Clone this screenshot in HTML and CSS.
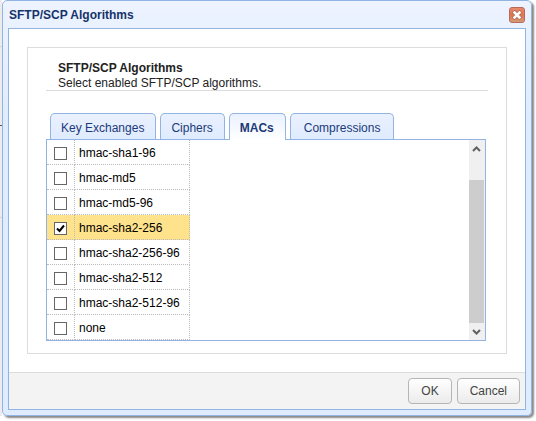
FILE: index.html
```
<!DOCTYPE html>
<html lang="en">
<head>
    <meta charset="UTF-8">
    <meta name="viewport" content="width=device-width, initial-scale=1.0">
    <title>SFTP/SCP Algorithms</title>
    <link rel="stylesheet" href="styles.css">
</head>
<body>
    <div class="dialog" role="dialog" aria-labelledby="dialogTitle">
        <div class="dialog-header">
            <h1 id="dialogTitle">SFTP/SCP Algorithms</h1>
            <button type="button" class="close-btn" aria-label="Close">
                <svg width="16" height="16" viewBox="0 0 16 16">
                    <defs>
                        <linearGradient id="closeFill" x1="0" y1="0" x2="0" y2="1">
                            <stop offset="0" stop-color="#e98a70"/>
                            <stop offset="0.5" stop-color="#de7650"/>
                            <stop offset="1" stop-color="#d3a07c"/>
                        </linearGradient>
                    </defs>
                    <rect x="0.5" y="0.5" width="15" height="15" rx="2.5" fill="url(#closeFill)" stroke="#b96a58"/>
                    <path d="M5.5 5.5L10.5 10.5M10.5 5.5L5.5 10.5" stroke="#b5654f" stroke-width="4" stroke-linecap="square"/>
                    <path d="M5.5 5.5L10.5 10.5M10.5 5.5L5.5 10.5" stroke="#fff" stroke-width="2.6" stroke-linecap="square"/>
                </svg>
            </button>
        </div>

        <form class="dialog-frame">
            <div class="dialog-body">
                <section class="panel">
                    <div class="panel-heading">
                        <h2>SFTP/SCP Algorithms</h2>
                        <p>Select enabled SFTP/SCP algorithms.</p>
                    </div>

                    <div class="tabs" role="tablist">
                        <button type="button" class="tab" role="tab">Key Exchanges</button>
                        <button type="button" class="tab" role="tab">Ciphers</button>
                        <button type="button" class="tab active" role="tab" aria-selected="true">MACs</button>
                        <button type="button" class="tab" role="tab">Compressions</button>
                    </div>

                    <div class="list">
                        <table class="grid">
                            <tr>
                                <td class="check"><input type="checkbox" id="sha1-96"></td>
                                <td><label for="sha1-96">hmac-sha1-96</label></td>
                            </tr>
                            <tr>
                                <td class="check"><input type="checkbox" id="md5"></td>
                                <td><label for="md5">hmac-md5</label></td>
                            </tr>
                            <tr>
                                <td class="check"><input type="checkbox" id="md5-96"></td>
                                <td><label for="md5-96">hmac-md5-96</label></td>
                            </tr>
                            <tr class="selected">
                                <td class="check"><input type="checkbox" id="sha2-256" checked></td>
                                <td><label for="sha2-256">hmac-sha2-256</label></td>
                            </tr>
                            <tr>
                                <td class="check"><input type="checkbox" id="sha2-256-96"></td>
                                <td><label for="sha2-256-96">hmac-sha2-256-96</label></td>
                            </tr>
                            <tr>
                                <td class="check"><input type="checkbox" id="sha2-512"></td>
                                <td><label for="sha2-512">hmac-sha2-512</label></td>
                            </tr>
                            <tr>
                                <td class="check"><input type="checkbox" id="sha2-512-96"></td>
                                <td><label for="sha2-512-96">hmac-sha2-512-96</label></td>
                            </tr>
                            <tr>
                                <td class="check"><input type="checkbox" id="none"></td>
                                <td><label for="none">none</label></td>
                            </tr>
                        </table>

                        <div class="scrollbar">
                            <svg width="15" height="17" viewBox="0 0 15 17" fill="none" stroke="#606060" stroke-width="2">
                                <path d="M4 11L7.5 7.5L11 11"/>
                            </svg>
                            <div class="thumb"></div>
                            <svg width="15" height="17" viewBox="0 0 15 17" fill="none" stroke="#606060" stroke-width="2">
                                <path d="M4 7L7.5 10.5L11 7"/>
                            </svg>
                        </div>
                    </div>
                </section>
            </div>

            <div class="dialog-footer">
                <button type="submit" class="btn">OK</button>
                <button type="button" class="btn">Cancel</button>
            </div>
        </form>
    </div>
</body>
</html>
```
FILE: styles.css
```
* {
    margin: 0;
    padding: 0;
    box-sizing: border-box;
    font-family: "Liberation Sans", Arial, sans-serif;
    font-size: 12px;
}

/* The page behind the dialog shows as a thin strip on the left */
body {
    min-height: 100vh;
    background:
        linear-gradient(#555, #555) 0 125px / 2px 1px no-repeat,
        linear-gradient(#d5d5d5, #d5d5d5) 0 46px / 2px 1px no-repeat,
        linear-gradient(#d5d5d5, #d5d5d5) 0 217px / 2px 1px no-repeat,
        linear-gradient(#ececec, #ececec) 0 0 / 2px 416px no-repeat,
        #fff;
    color: #000;
    line-height: 15px;
}

/* Dialog window */
.dialog {
    margin: 0 4px 0 2px;
    padding: 0 5px 5px;
    background: linear-gradient(#edf3ff, #dfebff 120px);
    border: 1px solid #92b4e3;
    border-radius: 5px;
    box-shadow: 2px 2px 2px #888;
}

.dialog-header {
    display: flex;
    justify-content: space-between;
    align-items: center;
    height: 27px;
    padding: 0 1px;
}

.dialog-header h1 {
    padding-top: 2px;
    color: #15336b;
    font-weight: bold;
}

.close-btn {
    width: 16px;
    height: 16px;
    background: none;
    border: none;
    cursor: pointer;
}

.close-btn svg {
    display: block;
}

.dialog-frame {
    border: 1px solid #92b4e3;
    background: #fff;
}

.dialog-body {
    padding: 18px;
}

/* Algorithms panel */
.panel {
    padding: 13px 18px 12px;
    border: 1px solid #dcdcdc;
}

.panel-heading {
    padding: 0 12px;
    border-bottom: 1px solid #dcdcdc;
    color: #222;
}

.panel-heading h2 {
    font-weight: bold;
}

.panel-heading p {
    line-height: 14px;
}

/* Tabs */
.tabs {
    display: flex;
    gap: 4px;
    margin-top: 22px;
    padding: 0 4px;
}

.tab {
    height: 26px;
    padding: 2px 11px 0 10px;
    background: linear-gradient(#eaf1ff, #dfebff);
    border: 1px solid #92b4e3;
    border-bottom: none;
    border-radius: 5px 5px 0 0;
    color: #1c3a78;
    cursor: pointer;
}

.tab:last-child {
    padding: 2px 13px 0;
}

.tab.active {
    height: 27px;
    margin-bottom: -1px;
    background: linear-gradient(#eaf1ff, #fff);
    font-weight: bold;
    z-index: 1;
}

/* List of algorithms */
.list {
    display: flex;
    justify-content: space-between;
    margin-right: 2px;
    border: 1px solid #92b4e3;
}

.grid {
    border-collapse: separate;
    border-spacing: 0;
}

.grid td {
    height: 25px;
    min-width: 115px;
    padding: 2px 4px 0;
    border-right: 1px dotted #bbb;
    border-bottom: 1px dotted #bbb;
}

.grid td.check {
    width: 28px;
    min-width: 0;
    padding: 2px 7px 0;
}

.grid .selected td {
    background: #ffe28c;
}

.grid input {
    display: block;
    appearance: none;
    width: 13px;
    height: 13px;
    border: 1px solid #666;
    background: #fff;
}

.grid input:checked {
    background: #fff url("data:image/svg+xml,%3Csvg xmlns='http://www.w3.org/2000/svg' viewBox='0 0 11 11'%3E%3Cpath d='M2 5.5L4.5 8L9 2.5' fill='none' stroke='%23000' stroke-width='2'/%3E%3C/svg%3E") center / 11px 11px no-repeat;
}

.scrollbar {
    display: flex;
    flex-direction: column;
    width: 16px;
    background: #f0f0f0;
}

.thumb {
    flex: 1;
    width: 15px;
    margin-top: 23px;
    background: #cdcdcd;
}

/* Footer buttons */
.dialog-footer {
    display: flex;
    justify-content: flex-end;
    gap: 5px;
    padding: 5px;
    background: #f3f3f3;
    border-top: 1px solid #dcdcdc;
}

.btn {
    height: 26px;
    padding: 0 12px;
    background: linear-gradient(#fff, #ebebeb);
    border: 1px solid #b5b5b5;
    border-radius: 4px;
    color: #444;
    cursor: pointer;
}
```
